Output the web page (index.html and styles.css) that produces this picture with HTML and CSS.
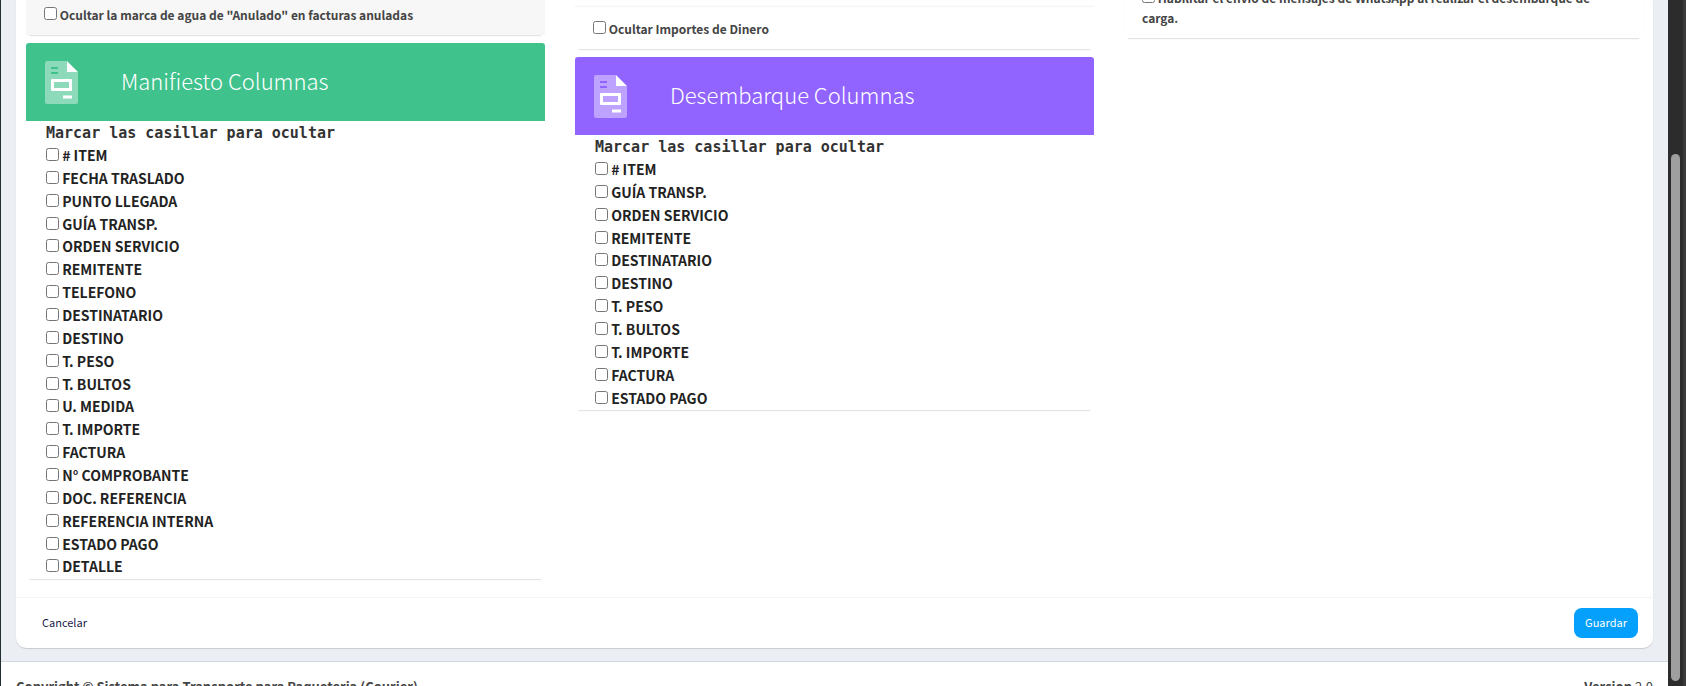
FILE: index.html
```
<!DOCTYPE html>
<html lang="es">
<head>
<meta charset="utf-8">
<title>Configuración</title>
<link rel="stylesheet" href="styles.css">
</head>
<body>
<div class="viewport">
  <div class="page">
    <main class="content">
      <form class="card">
        <div class="columns">
          <div class="column">
            <section class="option option-muted">
              <label><input type="checkbox"> Ocultar la marca de agua de "Anulado" en facturas anuladas</label>
            </section>
            <section class="widget">
              <header class="widget-header green">
                <svg class="doc-icon" viewBox="0 0 33 43" aria-hidden="true"><path class="sheet" fill-rule="evenodd" d="M2 0H22V9Q22 11 24 11H33V41Q33 43 31 43H2Q0 43 0 41V2Q0 0 2 0ZM6 6V8H13V6ZM6 11V13H13V11Z"/><path class="solid" fill-rule="evenodd" d="M22 0 33 11H22ZM7 18H26Q27 18 27 19V29Q27 30 26 30H7Q6 30 6 29V19Q6 18 7 18ZM9 21V27H24V21ZM18 34.500H27V37.500H18Z"/></svg>
                <h2>Manifiesto Columnas</h2>
              </header>
              <div class="widget-body">
                <p class="hint">Marcar las casillar para ocultar</p>
                <ul class="checks">
                  <li><label><input type="checkbox"> # ITEM</label></li>
                  <li><label><input type="checkbox"> FECHA TRASLADO</label></li>
                  <li><label><input type="checkbox"> PUNTO LLEGADA</label></li>
                  <li><label><input type="checkbox"> GUÍA TRANSP.</label></li>
                  <li><label><input type="checkbox"> ORDEN SERVICIO</label></li>
                  <li><label><input type="checkbox"> REMITENTE</label></li>
                  <li><label><input type="checkbox"> TELEFONO</label></li>
                  <li><label><input type="checkbox"> DESTINATARIO</label></li>
                  <li><label><input type="checkbox"> DESTINO</label></li>
                  <li><label><input type="checkbox"> T. PESO</label></li>
                  <li><label><input type="checkbox"> T. BULTOS</label></li>
                  <li><label><input type="checkbox"> U. MEDIDA</label></li>
                  <li><label><input type="checkbox"> T. IMPORTE</label></li>
                  <li><label><input type="checkbox"> FACTURA</label></li>
                  <li><label><input type="checkbox"> N° COMPROBANTE</label></li>
                  <li><label><input type="checkbox"> DOC. REFERENCIA</label></li>
                  <li><label><input type="checkbox"> REFERENCIA INTERNA</label></li>
                  <li><label><input type="checkbox"> ESTADO PAGO</label></li>
                  <li><label><input type="checkbox"> DETALLE</label></li>
                </ul>
              </div>
            </section>
          </div>
          <div class="column">
            <section class="option option-ruled">
              <label><input type="checkbox"> Ocultar Importes de Dinero</label>
            </section>
            <section class="widget">
              <header class="widget-header purple">
                <svg class="doc-icon" viewBox="0 0 33 43" aria-hidden="true"><path class="sheet" fill-rule="evenodd" d="M2 0H22V9Q22 11 24 11H33V41Q33 43 31 43H2Q0 43 0 41V2Q0 0 2 0ZM6 6V8H13V6ZM6 11V13H13V11Z"/><path class="solid" fill-rule="evenodd" d="M22 0 33 11H22ZM7 18H26Q27 18 27 19V29Q27 30 26 30H7Q6 30 6 29V19Q6 18 7 18ZM9 21V27H24V21ZM18 34.500H27V37.500H18Z"/></svg>
                <h2>Desembarque Columnas</h2>
              </header>
              <div class="widget-body">
                <p class="hint">Marcar las casillar para ocultar</p>
                <ul class="checks">
                  <li><label><input type="checkbox"> # ITEM</label></li>
                  <li><label><input type="checkbox"> GUÍA TRANSP.</label></li>
                  <li><label><input type="checkbox"> ORDEN SERVICIO</label></li>
                  <li><label><input type="checkbox"> REMITENTE</label></li>
                  <li><label><input type="checkbox"> DESTINATARIO</label></li>
                  <li><label><input type="checkbox"> DESTINO</label></li>
                  <li><label><input type="checkbox"> T. PESO</label></li>
                  <li><label><input type="checkbox"> T. BULTOS</label></li>
                  <li><label><input type="checkbox"> T. IMPORTE</label></li>
                  <li><label><input type="checkbox"> FACTURA</label></li>
                  <li><label><input type="checkbox"> ESTADO PAGO</label></li>
                </ul>
              </div>
            </section>
          </div>
          <div class="column">
            <section class="option option-scrolled">
              <label><input type="checkbox"> Habilitar el envío de mensajes de WhatsApp al realizar el desembarque de carga.</label>
            </section>
          </div>
        </div>
        <div class="actions">
          <button type="button" class="btn btn-plain">Cancelar</button>
          <button type="submit" class="btn btn-primary">Guardar</button>
        </div>
      </form>
    </main>
    <footer class="footer">
      <strong>Copyright © Sistema para Transporte para Paqueteria (Courier)</strong>
      <span><b>Version</b> 2.0</span>
    </footer>
  </div>
  <div class="scrollbar"><div class="thumb"></div></div>
</div>
</body>
</html>
```
FILE: styles.css
```
* { box-sizing: border-box; }

body {
  margin: 0;
  background: #ebeff4;
  color: #444;
  font: 13px/20px "Source Sans Pro", "Noto Sans CJK SC", sans-serif;
}

.viewport {
  display: flex;
  height: 100vh;
  overflow: hidden;
}

.page {
  flex: 1;
  min-width: 0;
  border-left: 1px solid #222d32;
}

.content { padding: 0 15px 13px; }

.card {
  background: #fff;
  border-radius: 0 0 10px 10px;
  box-shadow: 0 1px 1px rgba(0, 0, 0, .15);
}

.columns {
  display: grid;
  grid-template-columns: repeat(3, 1fr);
  align-items: start;
  gap: 30px;
  padding: 0 10px 18px;
}

.option,
.widget { box-shadow: 0 5px 1px -4px rgba(0, 0, 0, .1), 0 0 1px rgba(0, 0, 0, .05); }

.option {
  margin-bottom: 8px;
  padding: 5px 18px 10px;
  font-size: 12px;
  font-weight: 700;
}

.option-muted { background: #f7f7f7; }

.option-ruled {
  margin-top: 6px;
  padding: 12px 18px 10px;
  border-top: 1px solid #f4f4f4;
}

.option-scrolled {
  margin-top: -12px;
  padding-top: 0;
}

input[type="checkbox"] {
  width: 13px;
  height: 13px;
  margin: 0;
}

.widget { border-radius: 3px 3px 0 0; }

.widget-header {
  display: flex;
  align-items: center;
  gap: 43px;
  height: 78px;
  padding: 0 19px;
  border-radius: 3px 3px 0 0;
  color: #fff;
}

.widget-header h2 {
  margin: 0;
  padding-bottom: 4px;
  font-size: 22px;
  font-weight: 300;
  line-height: 28px;
}

.green { background: #40c28d; }
.purple { background: #9164ff; }

.doc-icon { width: 33px; height: 43px; }
.sheet { fill: #fff; opacity: .4; }
.solid { fill: #fff; }

.widget-body { padding: 2px 20px 1px; }

.hint {
  margin: 0;
  color: #333;
  font: bold 15px/21px Consolas, "DejaVu Sans Mono", monospace;
}

.checks {
  margin: 0;
  padding: 0;
  list-style: none;
  color: #222;
  font-size: 14px;
  font-weight: 700;
  line-height: 1.633;
}

.actions {
  display: flex;
  justify-content: space-between;
  padding: 10px 15px;
  border-top: 1px solid #f4f4f4;
}

.btn {
  height: 30px;
  padding: 0 11px 2px;
  border: 0;
  border-radius: 8px;
  font: 11px/20px "Source Sans Pro", "Noto Sans CJK SC", sans-serif;
}

.btn-plain { background: none; color: #1b1b4b; }
.btn-primary { background: #059ffc; color: #fff; }

.footer {
  display: flex;
  justify-content: space-between;
  padding: 15px;
  border-top: 1px solid #d2d6de;
  background: #fff;
}

.scrollbar {
  width: 18px;
  padding: 154px 3px 5px;
  border-right: 3px solid #3b3b3b;
  background: #2c2c2c;
}

.thumb {
  width: 9px;
  height: 100%;
  border-radius: 5px;
  background: #9f9f9f;
}
```
